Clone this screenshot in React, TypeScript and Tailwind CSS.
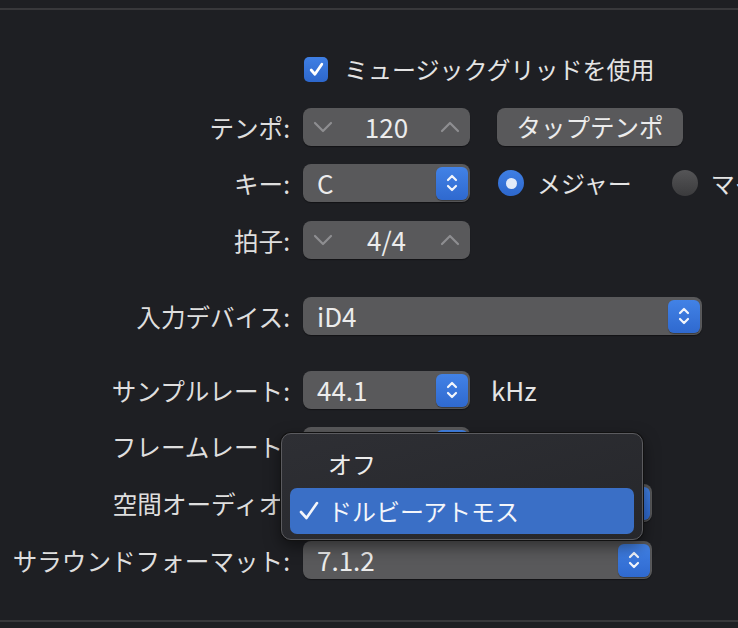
import type { ReactNode } from "react"

const FONT = "font-['Noto_Sans_CJK_JP','Noto_Sans',sans-serif]"

function Label({ children }: { children: ReactNode }) {
  return (
    <div className="w-[290px] shrink-0 text-right text-[24.6px] leading-none text-[#dedede] whitespace-nowrap">
      {children}
    </div>
  )
}

function Row({ label, children, className }: { label?: ReactNode; children: ReactNode; className?: string }) {
  return (
    <div className={`flex items-center h-[38px] ${className ?? ""}`}>
      <Label>{label}</Label>
      <div className="ml-[13px] flex items-center">{children}</div>
    </div>
  )
}

function Chevron({ up }: { up?: boolean }) {
  return (
    <svg width="20" height="12" viewBox="0 0 20 12" fill="none">
      <path
        d={up ? "M2 10 L10 2 L18 10" : "M2 2 L10 10 L18 2"}
        stroke="#8e8e91"
        strokeWidth="2.2"
        strokeLinecap="round"
        strokeLinejoin="round"
      />
    </svg>
  )
}

function Stepper({ value }: { value: string }) {
  return (
    <div className="w-[167px] h-[38px] rounded-[8px] bg-[#59595b] flex items-center justify-between px-[10px] shadow-[0_1px_1px_rgba(0,0,0,0.4)]">
      <Chevron />
      <span className="text-[26px] leading-none text-[#ececec]">{value}</span>
      <Chevron up />
    </div>
  )
}

function UpDownButton() {
  return (
    <div className="w-[32px] h-[33px] rounded-[6px] bg-gradient-to-b from-[#4282e6] to-[#2f69cf] flex items-center justify-center shadow-[0_1px_1px_rgba(0,0,0,0.35)]">
      <svg width="14" height="22" viewBox="0 0 14 22" fill="none">
        <path d="M3 8 L7 4 L11 8" stroke="#f2f5fb" strokeWidth="2.2" strokeLinecap="round" strokeLinejoin="round" />
        <path d="M3 14 L7 18 L11 14" stroke="#f2f5fb" strokeWidth="2.2" strokeLinecap="round" strokeLinejoin="round" />
      </svg>
    </div>
  )
}

function Select({ value, width, latin = true }: { value: string; width: string; latin?: boolean }) {
  return (
    <div className={`${width} h-[38px] rounded-[8px] bg-[#59595b] flex items-center justify-between pl-[14px] pr-[2px] shadow-[0_1px_1px_rgba(0,0,0,0.4)]`}>
      <span className={`${latin ? "text-[26px]" : "text-[24px]"} leading-none text-[#ececec]`}>{value}</span>
      <UpDownButton />
    </div>
  )
}

function Radio({ on }: { on?: boolean }) {
  return on ? (
    <div className="w-[26px] h-[26px] rounded-full bg-gradient-to-b from-[#3f7fe4] to-[#2d67cc] flex items-center justify-center">
      <div className="w-[11px] h-[11px] rounded-full bg-[#e2eaf8]" />
    </div>
  ) : (
    <div className="w-[26px] h-[26px] rounded-full bg-gradient-to-b from-[#555557] to-[#3b3b3d]" />
  )
}

export default function App() {
  return (
    <div className={`relative h-[628px] w-full overflow-hidden bg-[#1e1f23] ${FONT}`}>
      <div className="pt-[8px]">
        <div className="h-[2px] bg-[#38383b]" />
      </div>

      {/* Checkbox row */}
      <div className="mt-[47px] flex items-center h-[24px]">
        <div className="w-[304px] shrink-0" />
        <div className="w-[24px] h-[25px] rounded-[5px] bg-gradient-to-b from-[#3f7fe4] to-[#2d67cc] flex items-center justify-center">
          <svg width="17" height="17" viewBox="0 0 16 16" fill="none">
            <path d="M3 8.5 L6.5 12.5 L13 3" stroke="#ffffff" strokeWidth="2.6" strokeLinecap="round" strokeLinejoin="round" />
          </svg>
        </div>
        <span className="ml-[16px] text-[24px] leading-none text-[#e4e4e4] whitespace-nowrap">ミュージックグリッドを使用</span>
      </div>

      <Row label="テンポ:" className="mt-[27px]">
        <Stepper value="120" />
        <div className="ml-[27px] w-[186px] h-[38px] rounded-[8px] bg-[#59595b] flex items-center justify-center text-[24.5px] leading-none text-[#ececec] shadow-[0_1px_1px_rgba(0,0,0,0.4)]">
          タップテンポ
        </div>
      </Row>

      <Row label="キー:" className="mt-[18px]">
        <Select value="C" width="w-[167px]" />
        <div className="ml-[28px] flex items-center">
          <Radio on />
          <span className="ml-[13px] text-[24px] leading-none text-[#e4e4e4] whitespace-nowrap">メジャー</span>
        </div>
        <div className="ml-[40px] flex items-center">
          <Radio />
          <span className="ml-[13px] text-[24px] leading-none text-[#e4e4e4] whitespace-nowrap">マイナー</span>
        </div>
      </Row>

      <Row label="拍子:" className="mt-[19px]">
        <Stepper value="4/4" />
      </Row>

      <Row label="入力デバイス:" className="mt-[38px]">
        <Select value="iD4" width="w-[399px]" />
      </Row>

      <Row label="サンプルレート:" className="mt-[36px]">
        <Select value="44.1" width="w-[167px]" />
        <span className="ml-[21px] text-[26px] leading-none text-[#e4e4e4]">kHz</span>
      </Row>

      <Row label="フレームレート:" className="mt-[18px]">
        <Select value="30" width="w-[167px]" />
      </Row>

      <Row label="空間オーディオ:" className="mt-[19px]">
        <Select value="ドルビーアトモス" width="w-[349px]" latin={false} />
      </Row>

      <Row label="サラウンドフォーマット:" className="mt-[19px]">
        <Select value="7.1.2" width="w-[349px]" />
      </Row>

      <div className="mt-[41px] h-[2px] bg-[#38383b]" />

      {/* Popup menu */}
      <div className="absolute left-[281px] top-[433px] w-[362px] h-[107px] rounded-[10px] bg-gradient-to-br from-[#2e2f34] to-[#26272b] border border-[#5b5b5f] shadow-[0_0_0_1px_#111,0_6px_16px_rgba(0,0,0,0.5)] px-[8px] pt-[8px]">
        <div className="h-[44px] flex items-center pl-[38px] text-[24px] leading-none text-[#ececec]">オフ</div>
        <div className="mt-[2px] h-[46px] rounded-[7px] bg-[#3a6fc6] flex items-center pl-[8px] text-[24px] leading-none text-[#f4f6fa]">
          <svg width="22" height="20" viewBox="0 0 22 20" fill="none">
            <path d="M3 11 L8.5 17 L19 2" stroke="#f4f6fa" strokeWidth="2.6" strokeLinecap="round" strokeLinejoin="round" />
          </svg>
          <span className="ml-[8px]">ドルビーアトモス</span>
        </div>
      </div>
    </div>
  )
}
